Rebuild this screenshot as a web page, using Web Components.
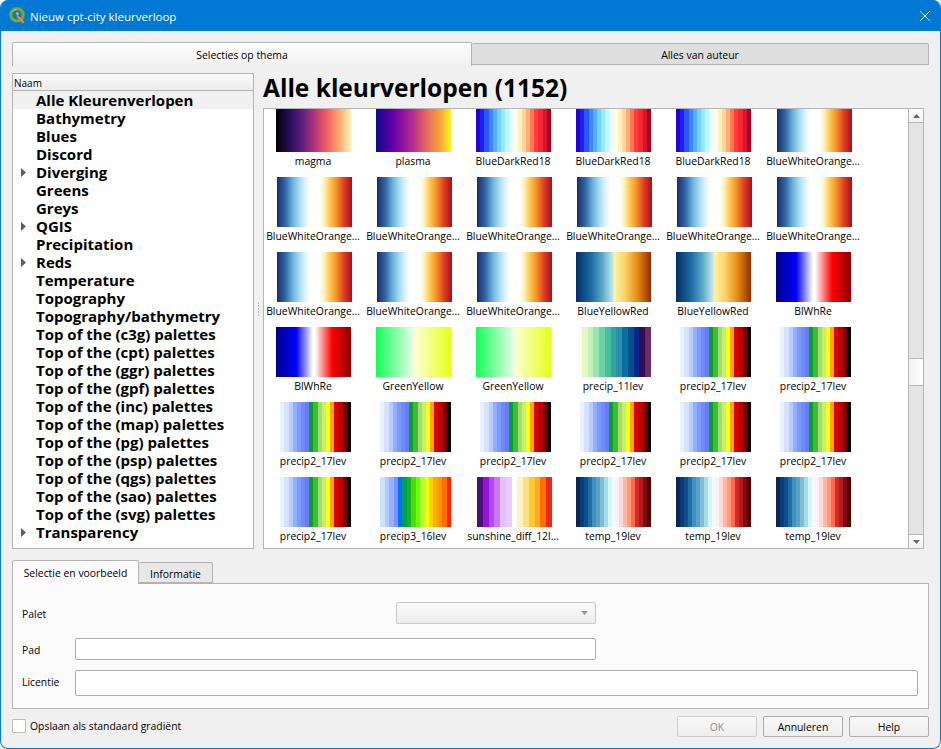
<!DOCTYPE html>
<html lang="nl"><head><meta charset="utf-8"><title>Nieuw cpt-city kleurverloop</title>
<style>
html,body{margin:0;padding:0;background:#fff;width:941px;height:749px;overflow:hidden}
body{font:10.4px "Open Sans","Noto Sans",sans-serif;color:#000}
</style></head><body>
<q-dialog>
  <q-main-tabs></q-main-tabs>
  <q-browser></q-browser>
  <q-detail-tabs></q-detail-tabs>
  <q-footer></q-footer>
</q-dialog>
<script>
function def(name,css,html,init){
  customElements.define(name,class extends HTMLElement{
    constructor(){super();const r=this.attachShadow({mode:'open'});
      r.innerHTML='<style>'+css+'</style>'+html;}
    connectedCallback(){if(init&&!this._i){this._i=1;init(this.shadowRoot,this);}}
  });
}
const UI='"Open Sans","Noto Sans",sans-serif';
def('q-dialog',`
 :host{display:flex;flex-direction:column;box-sizing:border-box;width:941px;height:749px;background:#f0f0f0;
  border:1px solid #0078d4;border-top:0;border-radius:8px;overflow:hidden;font:10.4px ${UI}}
 .body{flex:1;display:flex;flex-direction:column;padding:11px 11px 0 11px;min-height:0}
`,`<q-titlebar>Nieuw cpt-city kleurverloop</q-titlebar><div class="body"><slot></slot></div>`);

def('q-titlebar',`
 :host{display:flex;align-items:center;height:31px;flex:none;background:#0078d4;color:#fff;margin:0 -1px;padding:0 10px 0 9px;font-size:11.5px}
 svg.logo{width:17px;height:17px;margin:0 4px 0 0;flex:none}
 .t{flex:1;padding-top:1px}
 svg.x{width:10px;height:10px;flex:none;margin-right:1px}
`,`<svg class="logo" viewBox="0 0 17 17"><circle cx="8" cy="7.8" r="6.2" fill="none" stroke="#7ea62c" stroke-width="3.2"/><path d="M3.6 4.6A6 6 0 0 1 8 2.4" stroke="#a9c05c" stroke-width="1.2" fill="none"/><path d="M6.4 6.4l2-1.6 2 2.2-1.8 2z" fill="#e0ac24"/><path d="M8.8 8.2l7 7.2-2.2 1.4-6.4-6.8z" fill="#d2742b"/><path d="M9.2 9.4l5 5.4" stroke="#f1d27a" stroke-width=".9"/></svg><div class="t"><slot></slot></div><svg class="x" viewBox="0 0 10 10"><path d="M.3.3l9.4 9.4M9.7.3L.3 9.7" stroke="#fff" stroke-width="1" fill="none"/></svg>`);

def('q-main-tabs',`
 :host{display:flex;height:24px;flex:none;margin-bottom:7px;align-items:flex-end;font-size:10.4px}
 .a,.b{box-sizing:border-box;display:flex;align-items:center;justify-content:center;border:1px solid #b4b4b4;border-radius:2px 2px 0 0}
 .a{width:460px;height:24px;background:linear-gradient(#fdfdfd,#f0f0f0);border-bottom:0;padding-top:1px}
 .b{flex:1;height:22px;background:#dedede;border-left:0;padding-top:2px;margin-bottom:1px}
`,`<div class="a">Selecties op thema</div><div class="b">Alles van auteur</div>`);

def('q-browser',`
 :host{display:flex;height:476px;flex:none;gap:9px}
`,`<q-tree></q-tree><q-splitgrip></q-splitgrip><q-ramp-view></q-ramp-view>`);

def('q-splitgrip',`
 :host{display:flex;flex-direction:column;justify-content:center;align-items:center;width:0;margin:0 -4.5px;position:relative;padding-bottom:5px;gap:1px}
 i{display:block;width:1px;height:2px;background:#bdbdbd;flex:none}
`,`<i></i><i></i><i></i><i></i><i></i>`);

def('q-tree',`
 :host{display:flex;flex-direction:column;box-sizing:border-box;width:242px;border:1px solid #b4b4b4;background:#fff}
 .h{height:17px;box-sizing:border-box;border-bottom:1px solid #b4b4b4;background:linear-gradient(#fafafa,#ececec);font-size:10px;line-height:18px;padding-left:1px;flex:none}
`,`<div class="h">Naam</div><div class="rows"></div>`,(r)=>{
  const names=[['Alle Kleurenverlopen',0,1],['Bathymetry'],['Blues'],['Discord'],['Diverging',1],['Greens'],['Greys'],['QGIS',1],['Precipitation'],['Reds',1],['Temperature'],['Topography'],['Topography/bathymetry'],['Top of the (c3g) palettes'],['Top of the (cpt) palettes'],['Top of the (ggr) palettes'],['Top of the (gpf) palettes'],['Top of the (inc) palettes'],['Top of the (map) palettes'],['Top of the (pg) palettes'],['Top of the (psp) palettes'],['Top of the (qgs) palettes'],['Top of the (sao) palettes'],['Top of the (svg) palettes'],['Transparency',1]];
  const box=r.querySelector('.rows');
  names.forEach(([n,arrow,sel])=>{const e=document.createElement('q-tree-row');
    if(arrow)e.setAttribute('arrow','');if(sel)e.setAttribute('selected','');e.textContent=n;box.appendChild(e);});
});
def('q-tree-row',`
 :host{display:flex;align-items:center;height:18px;font-weight:700;font-size:15px;line-height:18px;white-space:nowrap;letter-spacing:0}
 :host([selected]){background:#f0f0f0}
 .ar{width:23px;flex:none;display:flex;justify-content:flex-start;padding-left:8px;box-sizing:border-box}
 svg{width:5px;height:9px;visibility:hidden}
 :host([arrow]) svg{visibility:visible}
`,`<div class="ar"><svg viewBox="0 0 5 9"><path d="M0 0l5 4.5L0 9z" fill="#5f5f5f"/></svg></div><slot></slot>`);

def('q-ramp-view',`
 :host{flex:1;display:flex;flex-direction:column;min-width:0;padding-right:5px}
 h1{margin:0;height:35px;flex:none;font:700 24.5px/30px ${UI};white-space:nowrap}
 .box{height:441px;box-sizing:border-box;border:1px solid #b4b4b4;background:#fff;display:flex;overflow:hidden;flex:none}
 .cv{flex:1;overflow:hidden;min-width:0}
`,`<h1>Alle kleurverlopen (1152)</h1><div class="box"><div class="cv"><q-ramp-grid></q-ramp-grid></div><q-vscroll></q-vscroll></div>`);

const stripes=a=>{const n=a.length;return 'linear-gradient(90deg,'+a.map((c,i)=>`${c} ${(i/n*100).toFixed(3)}% ${((i+1)/n*100).toFixed(3)}%`).join(',')+')';};
const RAMPS={
 magma:'linear-gradient(90deg,#000004 0%,#2b1160 20%,#5f1d7c 35%,#b5367a 52%,#f1605d 68%,#fea772 84%,#fcf3b8 100%)',
 plasma:'linear-gradient(90deg,#0d0887 0%,#6a00a8 24%,#b12a90 48%,#e16462 66%,#fca636 86%,#f0f921 100%)',
 bdr:stripes(['#2400d9','#1d1ff7','#2857ff','#3d87ff','#56b0ff','#75d3ff','#99eaff','#bcf9ff','#eaffff','#ffffea','#fff1bc','#ffd699','#ffac75','#ff7856','#ff3d3d','#f72735','#d8152f','#a50021']),
 bwo:'linear-gradient(90deg,#1b2c69 0%,#2f66a4 11%,#6bb2da 21%,#a3d8ef 29%,#d9f1fa 37%,#fff 44%,#fff 57%,#fff2b6 63%,#fec44f 71%,#f68b26 80%,#df3f24 89%,#a50f24 100%)',
 byr:'linear-gradient(90deg,#002f66 0%,#1c6aa3 20%,#5aa8c6 35%,#cdeeee 50.5%,#fff3a3 50.6%,#fdd468 65%,#e98a14 82%,#8f2e09 100%)',
 bwr:'linear-gradient(90deg,#00008b 0%,#0000ff 27%,#ffffff 49%,#ffffff 52%,#ff0000 75%,#8b0000 100%)',
 gy:'linear-gradient(90deg,#14ff58 0%,#e6ffe6 50%,#fcffd8 50.5%,#e6ff18 100%)',
 p11:stripes(['#ffffff','#e8f6c0','#c6efc0','#98e4ae','#68d2a4','#4bbc9f','#30a69c','#2b90a8','#056fa6','#04508a','#0c2490','#2f0f50','#6a2e60']),
 p2:stripes(['#ffffff','#e8f2fe','#d5e2ff','#b8ccff','#8fb0ff','#7d98ff','#6f88fb','#6a7bf6','#0aa024','#3cba3c','#aed76a','#b9f570','#ffff12','#ffa800','#e10000','#b90000','#750000','#000000']),
 p3:stripes(['#ffffff','#d2e0ff','#b4caff','#96b2ff','#7894ff','#0070ff','#00a050','#14b428','#50dc00','#64ff00','#b4ff32','#ffff00','#ffd200','#ffaa00','#ff9600','#ff6e00','#ff2300']),
 sun:stripes(['#4f0f75','#9414dc','#b548e8','#c878f0','#e4c0fa','#e8ccfc','#ffffff','#fff3c6','#ffe080','#ffc830','#ffa830','#ff7000','#e62a1f']),
 t19:stripes(['#0a2558','#0d3a78','#0c5090','#2070a8','#4090c0','#5aa0c8','#80bcd4','#a8dce4','#d8f4f8','#f2fcff','#fff0f4','#ffd8d8','#ffb8a0','#ff9880','#ff6848','#d22a28','#b41820','#7a0c14','#500000'])
};
const BWO='BlueWhiteOrange…';
const ITEMS=[['magma','magma'],['plasma','plasma'],['BlueDarkRed18','bdr'],['BlueDarkRed18','bdr'],['BlueDarkRed18','bdr'],[BWO,'bwo',1],
 [BWO,'bwo',1],[BWO,'bwo',1],[BWO,'bwo',1],[BWO,'bwo',1],[BWO,'bwo',1],[BWO,'bwo',1],
 [BWO,'bwo',1],[BWO,'bwo',1],[BWO,'bwo',1],['BlueYellowRed','byr'],['BlueYellowRed','byr'],['BlWhRe','bwr'],
 ['BlWhRe','bwr'],['GreenYellow','gy'],['GreenYellow','gy'],['precip_11lev','p11'],['precip2_17lev','p2'],['precip2_17lev','p2'],
 ['precip2_17lev','p2'],['precip2_17lev','p2'],['precip2_17lev','p2'],['precip2_17lev','p2'],['precip2_17lev','p2'],['precip2_17lev','p2'],
 ['precip2_17lev','p2'],['precip3_16lev','p3'],['sunshine_diff_12l…','sun',1],['temp_19lev','t19'],['temp_19lev','t19'],['temp_19lev','t19']];
def('q-ramp-grid',`
 :host{display:grid;grid-template-columns:repeat(6,100px);grid-auto-rows:75px;margin-top:-7px}
`,``,(r)=>{
  ITEMS.forEach(([n,k,w])=>{const e=document.createElement('q-ramp');e.setAttribute('ramp',k);if(w)e.setAttribute('shift','');e.textContent=n;r.appendChild(e);});
});
class QRamp extends HTMLElement{
  constructor(){super();const r=this.attachShadow({mode:'open'});
   r.innerHTML=`<style>:host{display:block;width:100px;height:75px;overflow:visible}
   .s{height:50px;width:75px;margin-left:12px}
   :host([shift]) .s{margin-left:13px}
   .l{width:98px;text-align:center;font-size:10.4px;line-height:18px;white-space:nowrap;margin-top:0}</style><div class="s"></div><div class="l"><slot></slot></div>`;}
  connectedCallback(){this.shadowRoot.querySelector('.s').style.background=RAMPS[this.getAttribute('ramp')];}
}
customElements.define('q-ramp',QRamp);

def('q-vscroll',`
 :host{display:flex;flex-direction:column;width:14px;flex:none;box-sizing:content-box;border-left:1px solid #b4b4b4;background:#e4e4e4}
 .btn{height:13px;flex:none;background:linear-gradient(#fdfdfd,#f2f2f2);display:flex;align-items:center;justify-content:center}
 .btn.u{border-bottom:1px solid #b8b8b8}
 .btn.d{border-top:1px solid #b8b8b8}
 .sp1{height:235px;flex:none}
 .th{height:26px;flex:none;background:linear-gradient(90deg,#f2f2f2,#fff);border-top:1px solid #b8b8b8;border-bottom:1px solid #b8b8b8}
 .sp2{flex:1}
 svg{width:7px;height:4px}
`,`<div class="btn u"><svg viewBox="0 0 7 4"><path d="M3.5 0L7 4H0z" fill="#666"/></svg></div><div class="sp1"></div><div class="th"></div><div class="sp2"></div><div class="btn d"><svg viewBox="0 0 7 4"><path d="M0 0h7L3.5 4z" fill="#666"/></svg></div>`);

def('q-detail-tabs',`
 :host{display:block;margin-top:11px;flex:none;font-size:10.4px}
 .tabs{display:flex;align-items:flex-end;height:23px;position:relative;z-index:1}
 .a,.b{box-sizing:border-box;border:1px solid #b4b4b4;border-radius:2px 2px 0 0;display:flex;align-items:center;justify-content:center}
 .a{width:127px;height:24px;background:#fbfbfb;border-bottom:0;margin-bottom:-1px;padding-bottom:0}
 .b{width:74px;height:21px;background:#e8e8e8;border-left:0;padding-top:2px}
 .pane{box-sizing:border-box;height:126px;border:1px solid #b4b4b4;background:#fbfbfb;padding:18px 10px 0 9px;
   display:grid;grid-template-columns:53px 321px 200px 1fr;grid-template-rows:22px 22px 22px;row-gap:14px;font-size:10.4px}
 .pane>.lab{display:flex;align-items:center;padding-top:2px}
 .r3{margin-top:-4px}
 .in{box-sizing:border-box;background:#fff;border:1px solid #adadad;border-radius:2px}
 .combo{grid-column:3;grid-row:1;box-sizing:border-box;border:1px solid #c8c8c8;border-radius:2px;background:linear-gradient(#fafafa,#ededed);display:flex;align-items:center;justify-content:flex-end;padding-right:7px}
 .combo svg{width:7px;height:4px}
 .lab.r3{margin-top:-8px}
`,`<div class="tabs"><div class="a">Selectie en voorbeeld</div><div class="b">Informatie</div></div>
<div class="pane">
 <div class="lab" style="grid-row:1;grid-column:1">Palet</div>
 <div class="combo"><svg viewBox="0 0 7 4"><path d="M0 0h7L3.5 4z" fill="#999"/></svg></div>
 <div class="lab" style="grid-row:2;grid-column:1">Pad</div>
 <div class="in" style="grid-row:2;grid-column:2/4"></div>
 <div class="lab r3" style="grid-row:3;grid-column:1">Licentie</div>
 <div class="in r3" style="grid-row:3;grid-column:2/5"></div>
</div>`);

def('q-footer',`
 :host{display:flex;align-items:flex-start;flex:1;padding-top:7px;font-size:10.4px}
 .cb{width:14px;height:14px;box-sizing:border-box;border:1px solid #bdbdbd;background:#fff;border-radius:1px;margin:3px 4px 0 0;flex:none}
 .t{flex:1;line-height:21px}
 .btns{display:flex;gap:6px}
`,`<div class="cb"></div><div class="t">Opslaan als standaard gradiënt</div><div class="btns"><q-btn disabled>OK</q-btn><q-btn>Annuleren</q-btn><q-btn>Help</q-btn></div>`);
def('q-btn',`
 :host{display:flex;align-items:center;justify-content:center;box-sizing:border-box;width:80px;height:21px;border:1px solid #adadad;border-radius:2px;background:linear-gradient(#f8f8f8,#eeeeee);font-size:10.4px}
 :host([disabled]){border-color:#cfcfcf;color:#8f8f8f}
`,`<slot></slot>`);
</script>
</body></html>
